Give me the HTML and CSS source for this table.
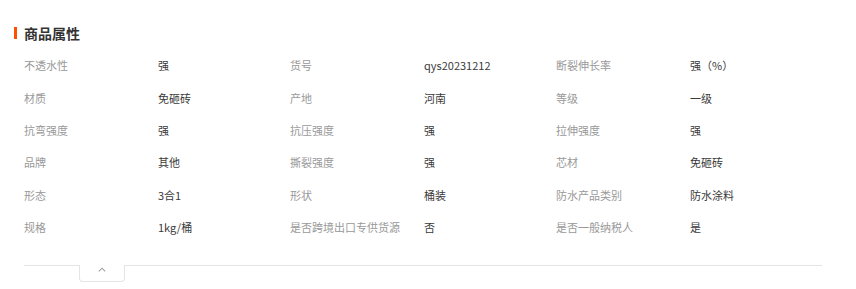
FILE: index.html
```html
<!DOCTYPE html>
<html lang="zh-CN">
<head>
<meta charset="utf-8">
<link rel="stylesheet" href="styles.css">
</head>
<body>
<div class="panel">
  <div class="title"><span class="bar"></span><span class="title-text">商品属性</span></div>
  <div class="grid">
    <div class="k">不透水性</div><div class="v">强</div>
    <div class="k">货号</div><div class="v">qys20231212</div>
    <div class="k">断裂伸长率</div><div class="v">强（%）</div>

    <div class="k">材质</div><div class="v">免砸砖</div>
    <div class="k">产地</div><div class="v">河南</div>
    <div class="k">等级</div><div class="v">一级</div>

    <div class="k">抗弯强度</div><div class="v">强</div>
    <div class="k">抗压强度</div><div class="v">强</div>
    <div class="k">拉伸强度</div><div class="v">强</div>

    <div class="k">品牌</div><div class="v">其他</div>
    <div class="k">撕裂强度</div><div class="v">强</div>
    <div class="k">芯材</div><div class="v">免砸砖</div>

    <div class="k">形态</div><div class="v">3合1</div>
    <div class="k">形状</div><div class="v">桶装</div>
    <div class="k">防水产品类别</div><div class="v">防水涂料</div>

    <div class="k">规格</div><div class="v">1kg/桶</div>
    <div class="k">是否跨境出口专供货源</div><div class="v">否</div>
    <div class="k">是否一般纳税人</div><div class="v">是</div>
  </div>
  <div class="divider"></div>
  <div class="toggle">
    <svg width="8" height="5" viewBox="0 0 8 5"><polyline points="0.8,4.3 4,1.2 7.2,4.3" fill="none" stroke="#a0a0a0" stroke-width="1.1"/></svg>
  </div>
</div>
</body>
</html>
```
FILE: styles.css
```css
html, body {
  margin: 0;
  padding: 0;
  background: #fff;
}
body {
  font-family: "Noto Sans CJK SC", "Noto Sans", sans-serif;
}
.panel {
  padding: 23px 0 0 24px;
  width: 798px;
}
.title {
  display: flex;
  align-items: center;
  gap: 7px;
  margin-left: -10px;
  height: 20px;
}
.bar {
  width: 3px;
  height: 12px;
  background: #ff5000;
}
.title-text {
  font-size: 14px;
  font-weight: 700;
  color: #333;
  line-height: 20px;
}
.grid {
  margin-top: 6px;
  display: grid;
  grid-template-columns: repeat(6, 133px);
  grid-auto-rows: 32.4px;
  align-items: center;
  font-size: 11px;
  line-height: 16px;
}
.k {
  color: #999;
  white-space: nowrap;
}
.v {
  color: #3a3a3a;
  padding-left: 1px;
  white-space: nowrap;
}
.divider {
  margin-top: 22px;
  height: 0;
  border-top: 1px solid #e5e5e5;
}
.toggle {
  margin-top: -1px;
  margin-left: 55px;
  width: 46px;
  height: 17px;
  border: 1px solid #e5e5e5;
  border-top: none;
  border-radius: 0 0 4px 4px;
  background: #fff;
  display: flex;
  justify-content: center;
  padding-top: 2px;
  box-sizing: border-box;
}
.toggle svg {
  display: block;
}
```
